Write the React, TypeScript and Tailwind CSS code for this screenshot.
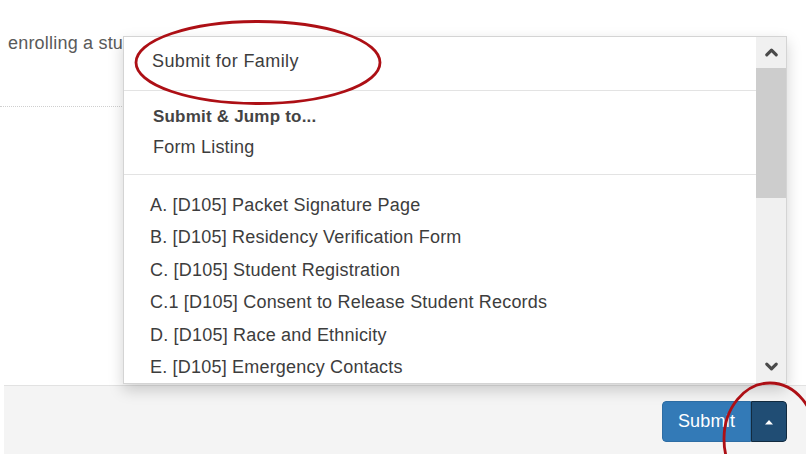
import { ChevronUp, ChevronDown } from 'lucide-react';

const forms = [
	'A. [D105] Packet Signature Page',
	'B. [D105] Residency Verification Form',
	'C. [D105] Student Registration',
	'C.1 [D105] Consent to Release Student Records',
	'D. [D105] Race and Ethnicity',
	'E. [D105] Emergency Contacts',
];

const SubmitMenu = () => {
	return (
		<div className="absolute left-[123px] top-[36px] w-[664px] h-[348px] flex bg-white border border-[#d4d4d4] shadow-[0_6px_14px_rgba(0,0,0,0.18)]">
			<div className="flex-1 overflow-hidden">
				<div className="pt-[12px] pb-[17px] pl-[28px] leading-[24px] tracking-[0.4px] text-[#3d3d3d]">
					Submit for Family
				</div>
				<div className="border-t border-[#e3e3e3]" />
				<div className="pt-[11px] pb-[12px] pl-[29px] text-[#3d3d3d]">
					<div className="text-[17px] font-bold leading-[30px] text-[#444]">
						Submit &amp; Jump to...
					</div>
					<div className="leading-[30px]">Form Listing</div>
				</div>
				<div className="border-t border-[#e3e3e3]" />
				<ul className="pt-[14px] pl-[26px] text-[#3d3d3d]">
					{forms.map((f) => (
						<li key={f} className="leading-[32.4px] whitespace-nowrap">
							{f}
						</li>
					))}
				</ul>
			</div>
			<div className="w-[30px] flex flex-col bg-[#f0f0f0]">
				<div className="h-[31px] flex items-center justify-center text-[#4a4a4a]">
					<ChevronUp size={19} strokeWidth={4} />
				</div>
				<div className="h-[130px] bg-[#cdcdcd]" />
				<div className="flex-1" />
				<div className="h-[26px] flex items-start justify-center text-[#4a4a4a]">
					<ChevronDown size={19} strokeWidth={4} />
				</div>
			</div>
		</div>
	);
};

const App = () => {
	return (
		<div
			className="relative w-[806px] h-[454px] overflow-hidden bg-white text-[18px] tracking-[0.2px]"
			style={{ fontFamily: '"Liberation Sans", Arial, sans-serif' }}
		>
			<div className="flex flex-col h-full">
				<div className="h-[385px]">
					<p className="pt-[31px] pl-[8px] leading-[24px] text-[#5a5a5a] whitespace-nowrap">
						enrolling a student will be reviewed by staff before it is complete.
					</p>
					<div className="mt-[51px] w-[600px] border-b border-dotted border-[#cfcfcf]" />
				</div>
				<div className="flex-1 ml-[4px] bg-[#f4f4f4] border-t border-[#e2e2e2] flex justify-end items-start pt-[15px] pr-[19px]">
					<div className="flex h-[41px] rounded-[4px] overflow-hidden">
						<button className="w-[89px] bg-[#337ab7] text-white border border-[#2e6da4] rounded-l-[4px]">
							Submit
						</button>
						<button className="w-[36px] bg-[#204d74] border border-[#122b40] rounded-r-[4px] flex items-center justify-center">
							<svg width="10" height="6" viewBox="0 0 10 6">
								<path d="M1 5.5 L5 1 L9 5.5 Z" fill="#fff" />
							</svg>
						</button>
					</div>
				</div>
			</div>

			<SubmitMenu />

			{/* red call-out rings */}
			<svg className="absolute inset-0 pointer-events-none" width="806" height="454">
				<ellipse cx="258" cy="62.5" rx="122" ry="41" fill="none" stroke="#ad0f15" strokeWidth="2.8" />
				<ellipse cx="770" cy="439" rx="46" ry="56" fill="none" stroke="#ad0f15" strokeWidth="2.8" />
			</svg>
		</div>
	);
};

export default App;
